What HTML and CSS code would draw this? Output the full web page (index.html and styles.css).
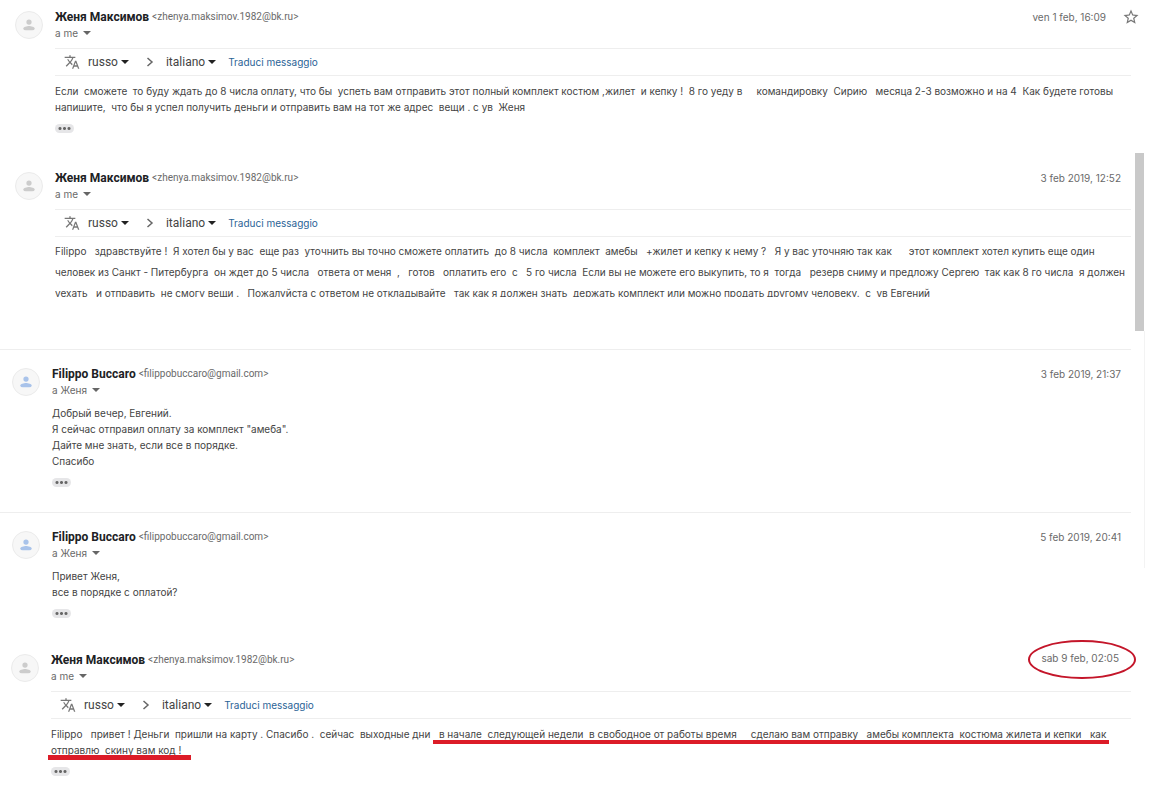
FILE: index.html
```html
<!DOCTYPE html>
<html lang="it">
<head>
<meta charset="utf-8">
<title>Conversazione</title>
<link rel="stylesheet" href="styles.css">
</head>
<body>
<svg class="defs" aria-hidden="true">
  <symbol id="person" viewBox="0 0 24 24"><circle cx="12" cy="7" r="4.500"/><path d="M2 21v-2.500c0-3.500 6.500-5 10-5s10 1.500 10 5V21z"/></symbol>
  <symbol id="translate" viewBox="0 0 24 24"><path d="M12.870 15.070l-2.540-2.510.03-.03A17.520 17.520 0 0 0 14.070 6H17V4h-7V2H8v2H1v2h11.170C11.500 7.920 10.440 9.750 9 11.350 8.070 10.320 7.300 9.190 6.690 8h-2c.73 1.630 1.730 3.170 2.980 4.560l-5.090 5.020L4 19l5-5 3.110 3.110.76-2.040zM18.500 10h-2L12 22h2l1.120-3h4.750L21 22h2l-4.500-12zm-2.620 7l1.620-4.330L19.120 17h-3.240z"/></symbol>
  <symbol id="chevron" viewBox="0 0 10 12"><path d="M2.500 2l4.500 4-4.500 4" fill="none" stroke="currentColor" stroke-width="1.500"/></symbol>
  <symbol id="star" viewBox="0 0 24 24"><path d="M22 9.240l-7.190-.62L12 2 9.190 8.630 2 9.240l5.460 4.730L5.820 21 12 17.270 18.180 21l-1.630-7.030L22 9.240zM12 15.400l-3.760 2.270 1-4.280-3.320-2.880 4.380-.38L12 6.100l1.710 4.040 4.380.38-3.320 2.880 1 4.280L12 15.400z"/></symbol>
</svg>
<div class="page">
  <main class="thread">
    <article class="message message-first">
      <svg class="avatar"><use href="#person"/></svg>
      <div class="content">
        <header class="head">
          <p class="sender"><strong class="name">Женя Максимов</strong><span class="email">&lt;zhenya.maksimov.1982@bk.ru&gt;</span></p>
          <time class="date">ven 1 feb, 16:09</time>
          <button class="star" aria-label="Speciali"><svg><use href="#star"/></svg></button>
        </header>
        <button class="recipient">a me</button>
        <div class="translate">
          <svg class="translate-icon"><use href="#translate"/></svg>
          <label class="lang"><select aria-label="Lingua di origine"><option>russo</option></select></label>
          <svg class="chevron"><use href="#chevron"/></svg>
          <label class="lang"><select aria-label="Lingua di destinazione"><option>italiano</option></select></label>
          <a class="link" href="#">Traduci messaggio</a>
        </div>
        <div class="text">
          <p>Если  сможете  то буду ждать до 8 числа оплату, что бы  успеть вам отправить этот полный комплект костюм ,жилет  и кепку !  8 го уеду в     командировку  Сирию   месяца 2-3 возможно и на 4  Как будете готовы</p>
          <p>напишите,  что бы я успел получить деньги и отправить вам на тот же адрес  вещи . с ув  Женя</p>
        </div>
        <button class="more" aria-label="Mostra contenuti abbreviati"></button>
      </div>
    </article>

    <article class="message message-second">
      <svg class="avatar"><use href="#person"/></svg>
      <div class="content">
        <header class="head">
          <p class="sender"><strong class="name">Женя Максимов</strong><span class="email">&lt;zhenya.maksimov.1982@bk.ru&gt;</span></p>
          <time class="date">3 feb 2019, 12:52</time>
        </header>
        <button class="recipient">a me</button>
        <div class="translate">
          <svg class="translate-icon"><use href="#translate"/></svg>
          <label class="lang"><select aria-label="Lingua di origine"><option>russo</option></select></label>
          <svg class="chevron"><use href="#chevron"/></svg>
          <label class="lang"><select aria-label="Lingua di destinazione"><option>italiano</option></select></label>
          <a class="link" href="#">Traduci messaggio</a>
        </div>
        <div class="text text-clipped">
          <p>Filippo   здравствуйте !  Я хотел бы у вас  еще раз  уточнить вы точно сможете оплатить  до 8 числа  комплект  амебы   +жилет и кепку к нему ?   Я у вас уточняю так как      этот комплект хотел купить еще один</p>
          <p>человек из Санкт - Питербурга  он ждет до 5 числа   ответа от меня  ,   готов   оплатить его  с   5 го числа  Если вы не можете его выкупить, то я  тогда   резерв сниму и предложу Сергею  так как 8 го числа  я должен</p>
          <p>уехать   и отправить  не смогу вещи .   Пожалуйста с ответом не откладывайте   так как я должен знать  держать комплект или можно продать другому человеку.  с  ув Евгений</p>
        </div>
      </div>
    </article>

    <article class="message message-third divided">
      <svg class="avatar avatar-blue"><use href="#person"/></svg>
      <div class="content">
        <header class="head">
          <p class="sender"><strong class="name">Filippo Buccaro</strong><span class="email">&lt;filippobuccaro@gmail.com&gt;</span></p>
          <time class="date">3 feb 2019, 21:37</time>
        </header>
        <button class="recipient">a Женя</button>
        <div class="text">
          <p>Добрый вечер, Евгений.</p>
          <p>Я сейчас отправил оплату за комплект "амеба".</p>
          <p>Дайте мне знать, если все в порядке.</p>
          <p>Спасибо</p>
        </div>
        <button class="more" aria-label="Mostra contenuti abbreviati"></button>
      </div>
    </article>

    <article class="message message-fourth divided">
      <svg class="avatar avatar-blue"><use href="#person"/></svg>
      <div class="content">
        <header class="head">
          <p class="sender"><strong class="name">Filippo Buccaro</strong><span class="email">&lt;filippobuccaro@gmail.com&gt;</span></p>
          <time class="date">5 feb 2019, 20:41</time>
        </header>
        <button class="recipient">a Женя</button>
        <div class="text">
          <p>Привет Женя,</p>
          <p>все в порядке с оплатой?</p>
        </div>
        <button class="more" aria-label="Mostra contenuti abbreviati"></button>
      </div>
    </article>

    <article class="message message-fifth">
      <svg class="avatar"><use href="#person"/></svg>
      <div class="content">
        <header class="head">
          <p class="sender"><strong class="name">Женя Максимов</strong><span class="email">&lt;zhenya.maksimov.1982@bk.ru&gt;</span></p>
          <time class="date date-circled">sab 9 feb, 02:05</time>
        </header>
        <button class="recipient">a me</button>
        <div class="translate">
          <svg class="translate-icon"><use href="#translate"/></svg>
          <label class="lang"><select aria-label="Lingua di origine"><option>russo</option></select></label>
          <svg class="chevron"><use href="#chevron"/></svg>
          <label class="lang"><select aria-label="Lingua di destinazione"><option>italiano</option></select></label>
          <a class="link" href="#">Traduci messaggio</a>
        </div>
        <div class="text">
          <p>Filippo   привет ! Деньги  пришли на карту . Спасибо .  сейчас  выходные дни <span class="marked">  в начале  следующей недели  в свободное от работы время     сделаю вам отправку   амебы комплекта  костюма жилета и кепки   как</span></p>
          <p><span class="marked marked-wide">отправлю  скину вам код !</span></p>
        </div>
        <button class="more" aria-label="Mostra contenuti abbreviati"></button>
      </div>
    </article>
  </main>
  <div class="rail" aria-hidden="true"><div class="thumb"></div><div class="track"></div></div>
</div>
</body>
</html>
```
FILE: styles.css
```css
* { box-sizing: border-box; }
body {
  margin: 0;
  background: #fff;
  color: #444;
  font-family: Inter, "Liberation Sans", sans-serif;
  font-size: 10px;
  line-height: 16px;
}
p { margin: 0; }
button {
  margin: 0;
  padding: 0;
  border: 0;
  background: none;
  color: inherit;
  font: inherit;
  cursor: pointer;
}
.defs { display: none; }
.page { display: flex; min-height: 100vh; }
.thread { flex: 1; min-width: 0; }

.message {
  display: flex;
  align-items: flex-start;
  gap: 12px;
  padding-top: 9px;
}
.message-first { min-height: 161px; padding-left: 15px; }
.message-second { min-height: 188px; padding-left: 15px; }
.message-third { min-height: 163px; padding-left: 12px; }
.message-fourth { min-height: 131px; padding-left: 12px; }
.message-fifth { padding-left: 11px; }
.divided { padding-top: 16px; border-top: 1px solid #eee; }

.avatar {
  flex: none;
  width: 28px;
  height: 28px;
  margin-top: 2px;
  padding: 6px;
  border: 1px solid #ebebeb;
  border-radius: 50%;
  background: #f7f7f7;
  fill: #ccc;
}
.avatar-blue { fill: #a9c3ea; }
.content { flex: 1; min-width: 0; }

.head { display: flex; align-items: center; height: 16px; }
.sender {
  display: flex;
  flex: 1;
  align-items: center;
  gap: 3px;
  font-family: Roboto, sans-serif;
  white-space: nowrap;
}
.name { color: #202124; font-size: 12px; font-weight: 700; }
.email, .date, .recipient { color: #6a6a6a; }
.date { margin-right: 10px; white-space: nowrap; }
.message-first .date { margin-right: 16px; }
.star { width: 18px; height: 18px; margin-right: -9px; }
.star svg { display: block; width: 18px; height: 18px; fill: #777; }
.date-circled {
  position: relative;
  align-self: flex-start;
  margin-right: 12px;
  line-height: 12px;
}
.date-circled::after {
  content: "";
  position: absolute;
  inset: -12px -17px -15px -13px;
  border: 2px solid #c4162a;
  border-radius: 50%;
}
.recipient { display: flex; align-items: center; gap: 5px; }
.recipient::after, .lang::after {
  content: "";
  border: 4px solid transparent;
  border-top-color: #666;
  border-bottom: 0;
}

.translate {
  display: flex;
  align-items: center;
  height: 28px;
  margin-top: 7px;
  padding-left: 9px;
  border-top: 1px solid #eee;
  border-bottom: 1px solid #eee;
}
.translate-icon { width: 16px; height: 16px; margin-right: 8px; fill: #777; }
.lang { display: flex; align-items: center; gap: 3px; }
.lang::after { border-top-color: #222; }
.lang select {
  appearance: none;
  field-sizing: content;
  padding: 0;
  border: 0;
  background: none;
  color: #444;
  font: 12px/16px Roboto, sans-serif;
}
.chevron { width: 10px; height: 12px; margin: 0 11px 0 16px; color: #666; }
.link { margin-left: 12px; color: #2a6396; text-decoration: none; }

.text { margin-top: 7px; }
.text p { white-space: pre-wrap; }
.text-clipped { height: 56px; margin-top: 4px; overflow: hidden; line-height: 21px; }
.marked { position: relative; }
.marked::after {
  content: "";
  position: absolute;
  left: 0;
  right: -3px;
  bottom: -4px;
  height: 4px;
  background: #dc1c28;
}
.marked-wide::after { left: -3px; right: -10px; height: 5px; }

.more {
  display: block;
  width: 19px;
  height: 9px;
  margin-top: 9px;
  border-radius: 5px;
  background: radial-gradient(circle, #666 1px, transparent 2px) 3px 0 / 4px 9px no-repeat,
    radial-gradient(circle, #666 1px, transparent 2px) 7px 0 / 5px 9px no-repeat,
    radial-gradient(circle, #666 1px, transparent 2px) 12px 0 / 4px 9px no-repeat,
    #e6e6e8;
}

.rail { flex: none; width: 27px; padding: 153px 13px 0 4px; }
.thumb { height: 178px; margin-right: 1px; background: #c9c9c9; }
.track { height: 237px; border-right: 1px solid #f3f3f3; }
```
